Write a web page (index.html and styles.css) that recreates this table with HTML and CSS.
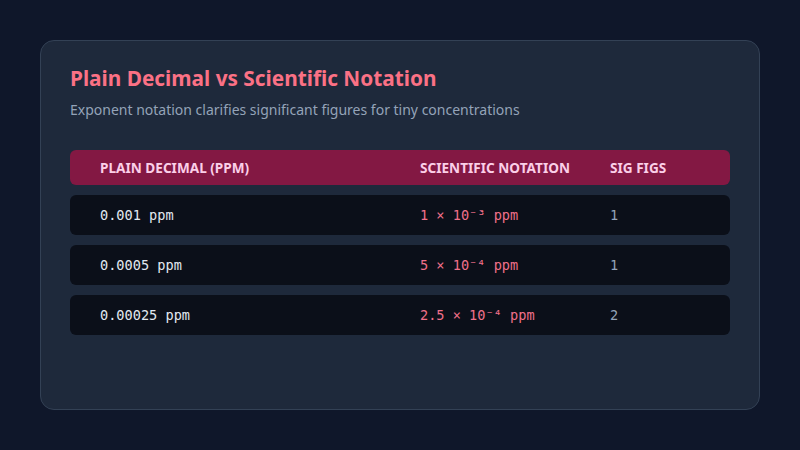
FILE: index.html
```html
<!DOCTYPE html>
<html>
<head>
<meta charset="utf-8">
<link rel="stylesheet" href="styles.css">
</head>
<body>
<div class="card">
  <h1 class="title">Plain Decimal vs Scientific Notation</h1>
  <p class="subtitle">Exponent notation clarifies significant figures for tiny concentrations</p>
  <div class="table">
    <div class="row head">
      <div class="c1">Plain Decimal (ppm)</div>
      <div class="c2">Scientific Notation</div>
      <div class="c3">Sig Figs</div>
    </div>
    <div class="row data">
      <div class="c1">0.001 ppm</div>
      <div class="c2">1 × 10⁻³ ppm</div>
      <div class="c3">1</div>
    </div>
    <div class="row data">
      <div class="c1">0.0005 ppm</div>
      <div class="c2">5 × 10⁻⁴ ppm</div>
      <div class="c3">1</div>
    </div>
    <div class="row data">
      <div class="c1">0.00025 ppm</div>
      <div class="c2">2.5 × 10⁻⁴ ppm</div>
      <div class="c3">2</div>
    </div>
  </div>
</div>
</body>
</html>
```
FILE: styles.css
```css
html, body { margin: 0; padding: 0; }
body {
  background: #0f172a;
  width: 800px;
  height: 450px;
  padding: 40px;
  box-sizing: border-box;
  font-family: "Noto Sans", "Open Sans", sans-serif;
}
.card {
  background: #1e293b;
  border: 1px solid #334155;
  border-radius: 14px;
  height: 370px;
  box-sizing: border-box;
  padding: 23px 29px;
}
.title {
  margin: 0;
  font-size: 20.8px;
  line-height: 28px;
  font-weight: 700;
  color: #fb7185;
}
.subtitle {
  margin: 8px 0 0;
  font-size: 14px;
  line-height: 20px;
  color: #94a3b8;
}
.table {
  margin-top: 30px;
  display: flex;
  flex-direction: column;
  gap: 10px;
}
.row {
  display: grid;
  grid-template-columns: 320px 190px 1fr;
  align-items: center;
  padding: 0 30px;
  border-radius: 6px;
}
.head {
  height: 35px;
  background: #831843;
  color: #fbcfe8;
  font-size: 13.6px;
  font-weight: 700;
  text-transform: uppercase;
}
.data {
  height: 40px;
  background: #0b0f19;
  font-family: "DejaVu Sans Mono", monospace;
  font-size: 13.6px;
  color: #e2e8f0;
}
.data .c2 { color: #f0708a; }
.data .c3 { color: #94a3b8; }
```
